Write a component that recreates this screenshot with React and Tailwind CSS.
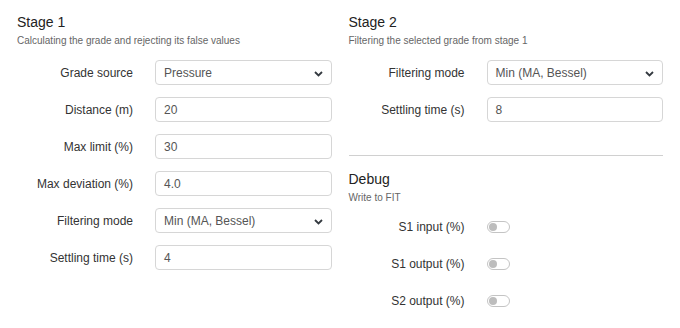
import React from 'react';

const Chevron = () => (
  <svg width="9" height="6" viewBox="0 0 9 6" className="absolute right-[8px] top-[10px]">
    <path d="M1 1l3.5 3.5L8 1" fill="none" stroke="#343a40" strokeWidth="1.8" />
  </svg>
);

const Row = ({ label, children }) => (
  <div className="flex items-center h-[25px]">
    <label className="w-[116px] shrink-0 text-right text-[12px] text-[#333]">{label}</label>
    <div className="ml-[22px] flex-1">{children}</div>
  </div>
);

const TextField = ({ value }) => (
  <div className="h-[25px] flex items-center px-[8px] border border-[#d6d6d6] rounded-[4px] bg-white text-[12px] text-[#555]">
    {value}
  </div>
);

const SelectField = ({ value }) => (
  <div className="relative h-[25px] flex items-center px-[8px] border border-[#d6d6d6] rounded-[4px] bg-white text-[12px] text-[#555]">
    {value}
    <Chevron />
  </div>
);

const Toggle = () => (
  <div className="w-[23px] h-[12px] rounded-full border border-[#c4c4c4] bg-white flex items-center px-[1px]">
    <div className="w-[8px] h-[8px] rounded-full bg-[#bdbdbd]" />
  </div>
);

const Header = ({ title, subtitle }) => (
  <div>
    <h2 className="text-[14px] leading-[20px] text-[#222]">{title}</h2>
    <p className="mt-[2px] text-[10px] leading-[14px] text-[#666]">{subtitle}</p>
  </div>
);

export default function App() {
  return (
    <div className="w-[680px] h-[328px] bg-white px-[17px] pt-[12px] grid grid-cols-2 gap-x-[17px] font-['Liberation_Sans',Arial,sans-serif]">
      <div>
        <Header title="Stage 1" subtitle="Calculating the grade and rejecting its false values" />
        <div className="mt-[12px] flex flex-col gap-[12px]">
          <Row label="Grade source"><SelectField value="Pressure" /></Row>
          <Row label="Distance (m)"><TextField value="20" /></Row>
          <Row label="Max limit (%)"><TextField value="30" /></Row>
          <Row label="Max deviation (%)"><TextField value="4.0" /></Row>
          <Row label="Filtering mode"><SelectField value="Min (MA, Bessel)" /></Row>
          <Row label="Settling time (s)"><TextField value="4" /></Row>
        </div>
      </div>
      <div>
        <Header title="Stage 2" subtitle="Filtering the selected grade from stage 1" />
        <div className="mt-[12px] flex flex-col gap-[12px]">
          <Row label="Filtering mode"><SelectField value="Min (MA, Bessel)" /></Row>
          <Row label="Settling time (s)"><TextField value="8" /></Row>
        </div>
        <hr className="mt-[33px] border-t border-[#d0d0d0]" />
        <div className="mt-[13px]">
          <Header title="Debug" subtitle="Write to FIT" />
        </div>
        <div className="mt-[9px] flex flex-col gap-[12px]">
          <Row label="S1 input (%)"><Toggle /></Row>
          <Row label="S1 output (%)"><Toggle /></Row>
          <Row label="S2 output (%)"><Toggle /></Row>
        </div>
      </div>
    </div>
  );
}
